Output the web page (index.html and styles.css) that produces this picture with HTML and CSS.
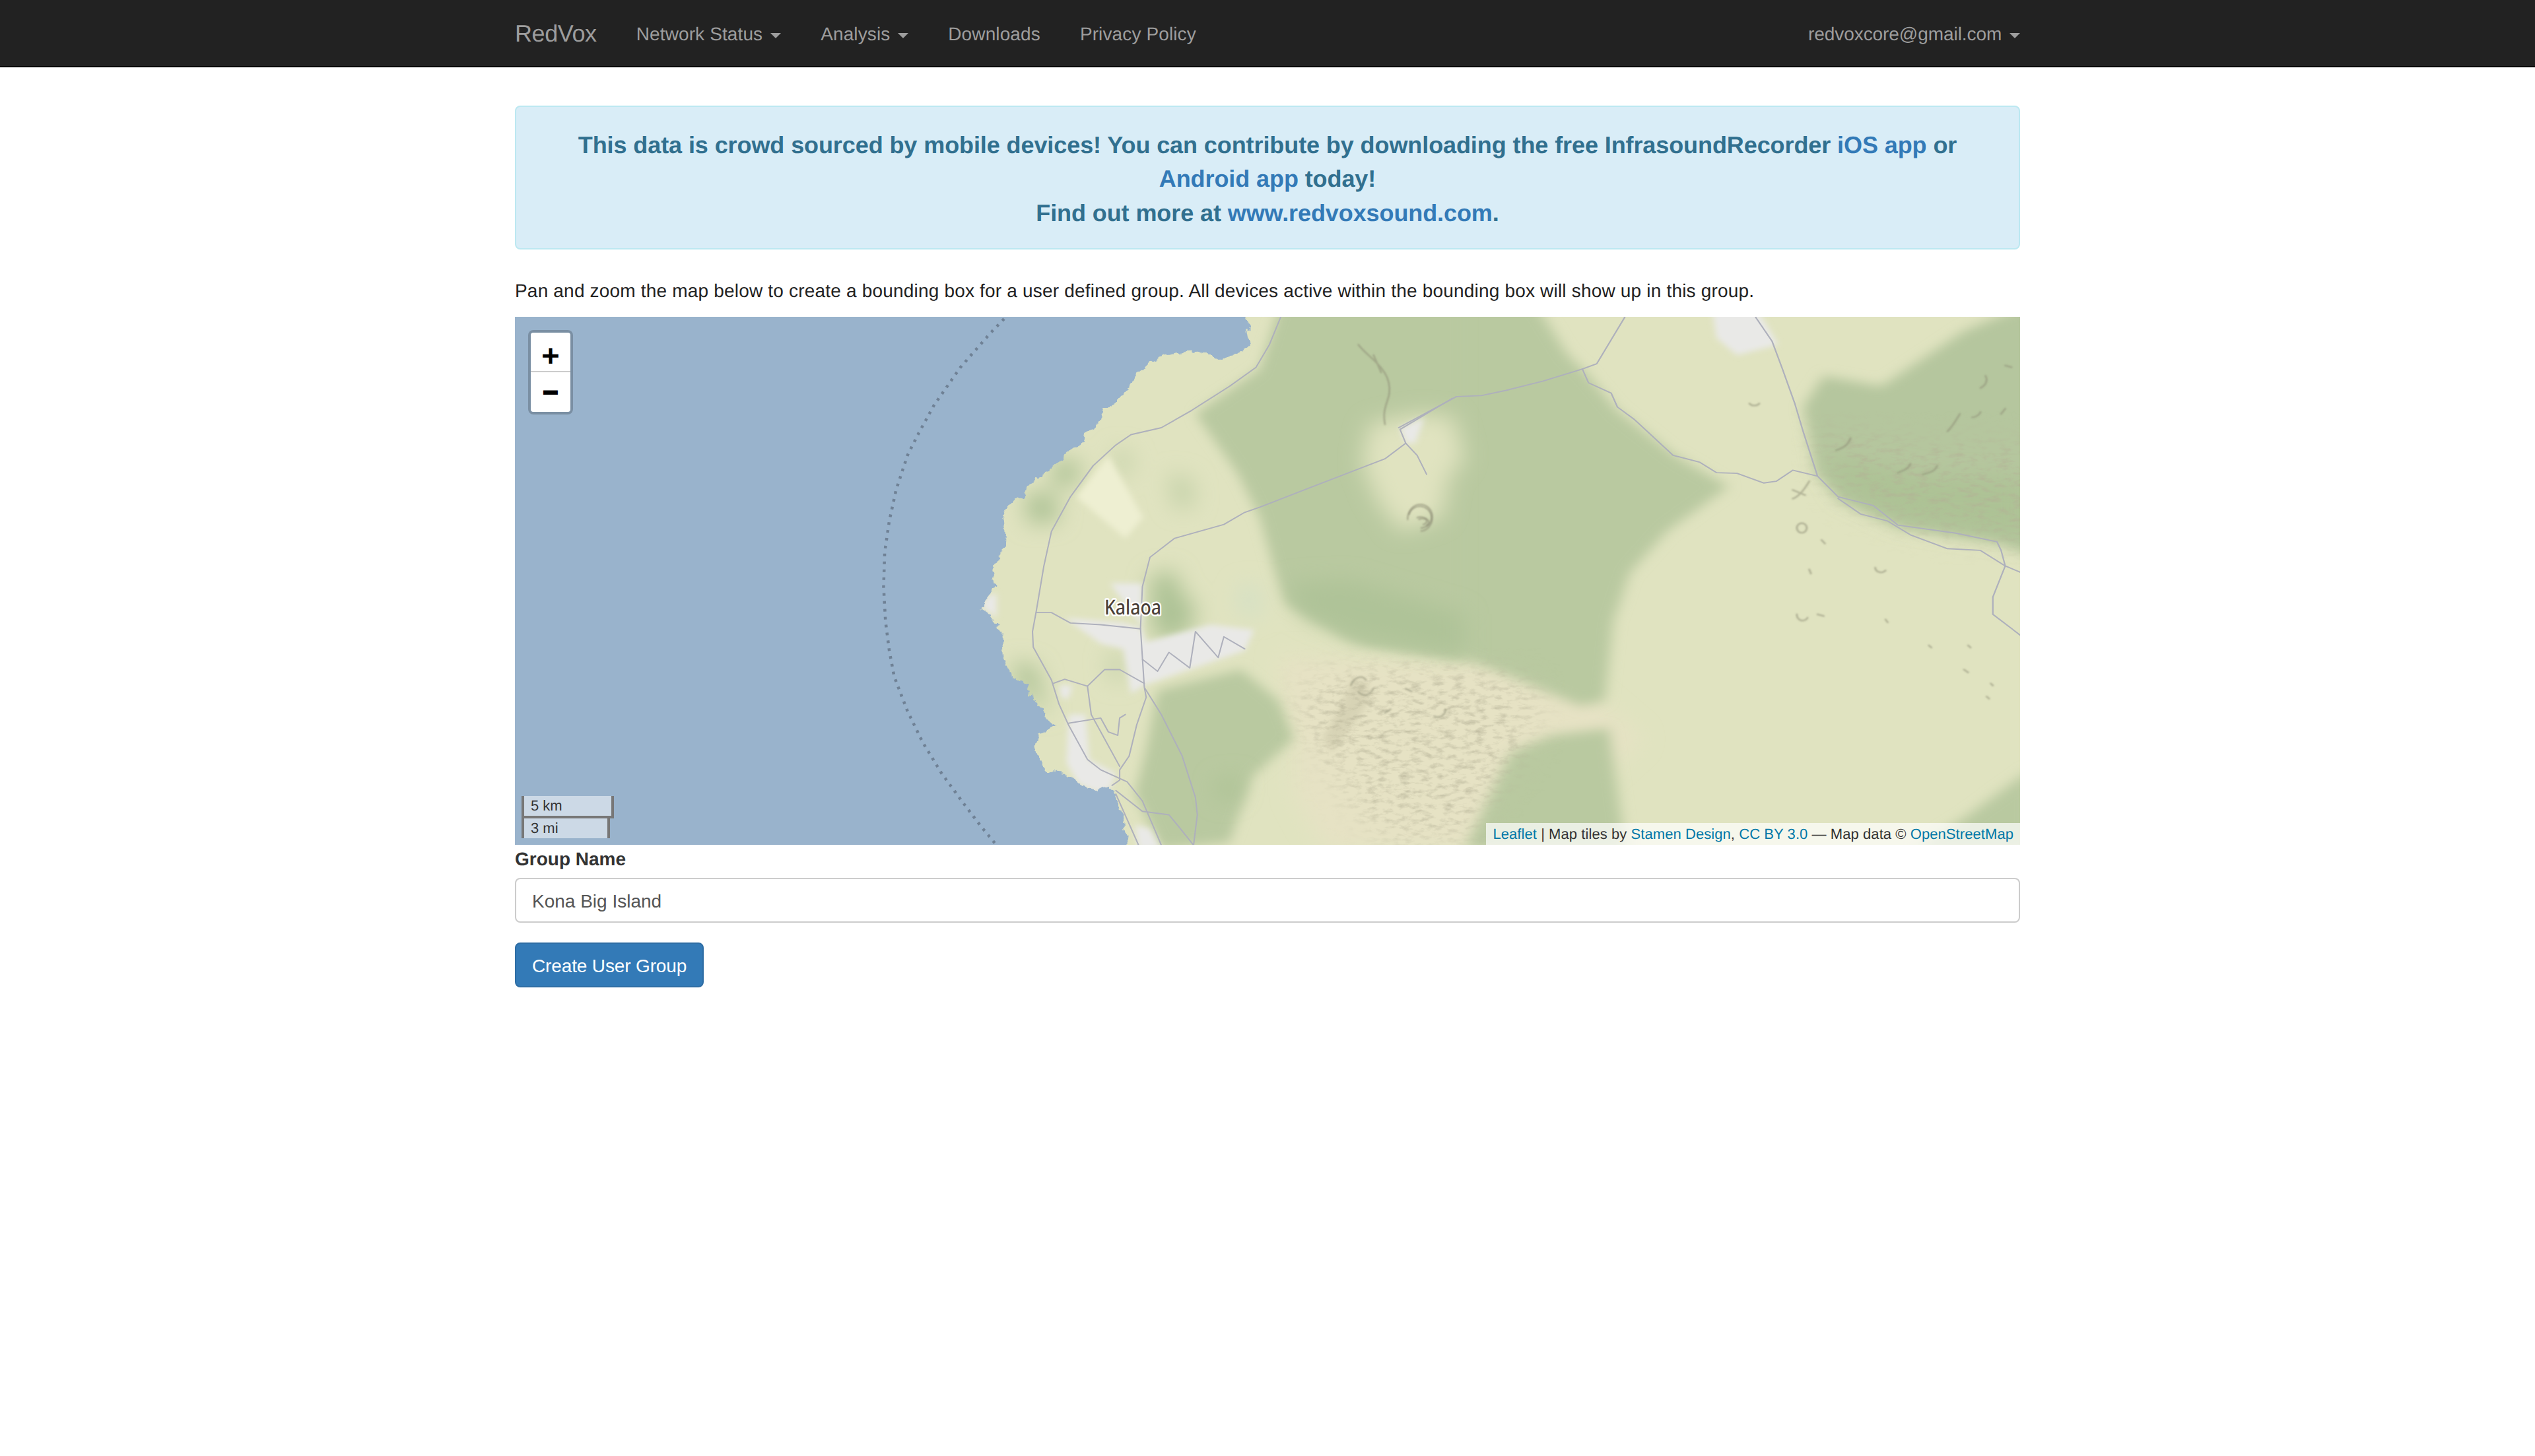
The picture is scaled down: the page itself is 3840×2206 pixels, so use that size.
FILE: index.html
```html
<!DOCTYPE html>
<html lang="en">
<head>
<meta charset="utf-8">
<title>RedVox</title>
<link rel="stylesheet" href="styles.css">
</head>
<body>
<nav class="navbar">
  <div class="container nav-inner">
    <a class="brand" href="#">RedVox</a>
    <ul class="nav-list">
      <li><a href="#">Network Status <span class="caret"></span></a></li>
      <li><a href="#">Analysis <span class="caret"></span></a></li>
      <li><a href="#">Downloads</a></li>
      <li><a href="#">Privacy Policy</a></li>
    </ul>
    <a class="nav-user" href="#">redvoxcore@gmail.com <span class="caret"></span></a>
  </div>
</nav>
<main class="container content">
  <div class="alert">
    This data is crowd sourced by mobile devices! You can contribute by downloading the free InfrasoundRecorder <a href="#">iOS app</a> or <a href="#">Android app</a> today!<br>
    Find out more at <a href="#">www.redvoxsound.com</a>.
  </div>
  <p class="intro">Pan and zoom the map below to create a bounding box for a user defined group. All devices active within the bounding box will show up in this group.</p>
  <div class="map">
    <svg class="map-art" viewBox="0 0 2280 800" xmlns="http://www.w3.org/2000/svg">
      <defs>
        <filter id="b30" x="-30%" y="-30%" width="160%" height="160%"><feGaussianBlur stdDeviation="30"/></filter>
        <filter id="b20" x="-30%" y="-30%" width="160%" height="160%"><feGaussianBlur stdDeviation="16"/></filter>
        <filter id="b8" x="-30%" y="-30%" width="160%" height="160%"><feGaussianBlur stdDeviation="8"/></filter>
        <filter id="b1" x="-30%" y="-30%" width="160%" height="160%"><feGaussianBlur stdDeviation="1"/></filter>
        <filter id="b2" x="-30%" y="-30%" width="160%" height="160%"><feGaussianBlur stdDeviation="2"/></filter>
        <filter id="shade" x="-10%" y="-10%" width="120%" height="120%">
          <feGaussianBlur in="SourceGraphic" stdDeviation="45" result="mask"/>
          <feTurbulence type="fractalNoise" baseFrequency=".035 .07" numOctaves="5" seed="11" result="n"/>
          <feColorMatrix in="n" type="matrix" values="0 0 0 0 .45  0 0 0 0 .43  0 0 0 0 .30  1.5 0 0 0 -.68" result="dark"/>
          <feComposite in="dark" in2="mask" operator="in"/>
        </filter>
        <filter id="coast" x="-5%" y="-5%" width="110%" height="110%">
          <feTurbulence type="fractalNoise" baseFrequency=".035" numOctaves="4" seed="4" result="n"/>
          <feDisplacementMap in="SourceGraphic" in2="n" scale="26" xChannelSelector="R" yChannelSelector="G"/>
          <feGaussianBlur stdDeviation=".7"/>
        </filter>
      </defs>
      <rect class="land" width="2280" height="800"/>
      <polygon class="rough-base" filter="url(#b30)" transform="translate(520 -10) scale(.574 .5236)" points="1110,1000 1568,1020 1780,1000 1940,1120 2070,1240 1950,1360 1890,1560 1230,1560 1150,1400 1150,1240 1120,1130"/>
      <g filter="url(#b20)" transform="translate(1320 -10) scale(.625 .5236)">
        <polygon class="green" points="-60,-40 350,-40 440,130 480,175 560,290 700,420 830,510 680,640 590,760 550,900 530,1130 470,1145 300,1060 150,990 -60,960"/>
        <polygon class="green" points="540,1210 580,1560 190,1560 300,1280 400,1230"/>
        <polygon class="green" points="1560,1330 1560,1560 1280,1560 1400,1470"/>
        <polygon class="green-hill" points="1600,-40 1400,60 1200,220 1060,190 1010,280 1040,470 1100,550 1250,630 1480,670 1600,730"/>
      </g>
      <g filter="url(#b30)" transform="translate(1320 -10) scale(.625 .5236)">
        <polygon class="green-deep" points="1060,420 1300,480 1560,490 1560,670 1470,650 1250,610 1110,530"/>
      </g>
      <g filter="url(#b20)" transform="translate(520 -10) scale(.574 .5236)">
        <polygon class="green" points="1120,-40 1060,170 890,300 1000,470 1060,600 1100,760 1130,850 1300,960 1600,1010 1600,-40"/>
        <polygon class="green" points="790,1100 1010,1040 1110,1130 1150,1240 1040,1350 980,1540 800,1560 730,1400 760,1270"/>
      </g>
      <g filter="url(#b30)" transform="translate(520 -10) scale(.574 .5236)">
        <polygon class="pale" points="1350,330 1480,300 1570,310 1600,430 1560,480 1540,600 1430,640 1370,550 1330,440"/>
        <polygon class="green-band" points="1130,790 1300,780 1600,880 1600,1000 1300,940 1170,880"/>
        <polygon class="green-deep" points="520,430 590,440 570,510 510,510"/>
        <polygon class="green-deep" points="440,530 520,530 530,610 450,620"/>
        <polygon class="green-soft" points="675,400 720,410 715,480 685,480"/>
        <polygon class="green-soft" points="820,470 880,490 885,570 835,575"/>
        <polygon class="green-deep" points="770,770 830,750 860,830 890,850 880,930 810,960 775,930"/>
        <polygon class="green-deep" points="410,1015 470,1030 490,1130 510,1180 470,1140 415,1070"/>
        <polygon class="green-deep" points="945,1360 1010,1350 1000,1410 950,1420"/>
        <polygon class="green-soft" points="660,990 700,990 700,1080 665,1070"/>
        <polygon class="mint" points="1005,800 1050,790 1060,890 1010,880"/>
      </g>
      <g filter="url(#b8)" transform="translate(520 -10) scale(.574 .5236)">
        <polygon class="cream" points="660,420 752,600 705,660 575,540"/>
        <polygon class="urban" points="665,790 750,790 750,920 700,905 545,890 640,965 700,980 720,1110 755,1085 1020,985 1045,925 930,910 760,960 745,910"/>
        <polygon class="urban" points="345,825 365,820 365,890 340,870 325,855"/>
        <polygon class="urban" points="530,1085 565,1085 555,1125 535,1120"/>
        <polygon class="urban" points="555,1170 600,1170 610,1300 680,1340 665,1385 630,1395 580,1370 550,1310"/>
        <polygon class="urban" points="1430,340 1495,310 1470,385 1445,385"/>
        <polygon class="urban" points="730,1490 770,1500 800,1560 740,1560"/>
      </g>
      <g filter="url(#b8)" transform="translate(1320 -10) scale(.625 .5236)">
        <polygon class="urban" points="790,0 900,0 950,100 850,130 800,80"/>
      </g>
      <polygon class="shade-src" filter="url(#shade)" transform="translate(520 -10) scale(.574 .5236)" points="1180,1060 1500,1030 1760,1060 1800,1160 1730,1320 1640,1450 1600,1540 1380,1530 1240,1320 1170,1200"/>
      <polygon class="ridge" filter="url(#b8)" transform="translate(520 -10) scale(.574 .5236)" points="1300,1070 1345,1075 1350,1130 1300,1210 1250,1280 1225,1240 1280,1130"/>
      <polygon class="shade-src" filter="url(#shade)" transform="translate(1320 -10) scale(.625 .5236)" points="1040,330 1300,380 1620,380 1620,700 1260,610 1100,530"/>

      <polygon class="water" filter="url(#coast)" transform="translate(520 -10) scale(.574 .5236)" points="1020,-30 1030,70 1035,100 1000,125 950,140 900,120 830,125 770,150 735,185 720,220 700,240 680,265 650,285 645,310 625,340 600,355 595,385 565,400 540,430 500,465 470,490 440,505 435,540 400,560 380,595 385,650 380,700 355,745 365,800 345,825 322,855 345,880 380,930 385,1000 405,1060 450,1085 460,1130 495,1165 520,1205 480,1225 470,1275 495,1335 540,1340 590,1375 630,1395 665,1375 685,1420 700,1490 720,1600 -1000,1600 -1000,-30"/>

      <g class="road" filter="url(#b1)" transform="translate(520 -10) scale(.574 .5236)">
        <polyline points="1115,20 1085,100 1050,165 980,220 880,290 800,340 720,360 680,390 620,450 560,540 510,640 490,740 470,870 460,930 462,975 510,1070 530,1140 555,1200 605,1300 640,1330 710,1365 750,1420 800,1548"/>
        <polyline points="1568,255 1430,345 1445,385 1390,430 1200,510 1060,570 1020,585 965,620 835,660 770,715 750,800 745,920 755,1090 760,1120 735,1200 715,1290 690,1330 690,1360 670,1375"/>
        <polyline points="470,875 510,875 560,905 640,910 745,922"/>
        <polyline points="750,1010 790,1045 820,990 875,1035 890,930 950,1005 965,945 1020,980"/>
        <polyline points="515,1080 545,1068 605,1088 650,1040 690,1040 755,1080"/>
        <polyline points="605,1088 615,1170 690,1320"/>
        <polyline points="555,1195 640,1180 660,1220 685,1230 690,1180 705,1170"/>
        <polyline points="757,1095 800,1170 855,1290 890,1410 895,1460 885,1548"/>
        <polyline points="680,1390 750,1450 820,1460 850,1500 885,1548"/>
        <polyline points="680,1400 740,1548"/>
        <polyline points="1445,385 1475,420 1500,475"/>
      </g>
      <g class="road" filter="url(#b1)" transform="translate(1320 -10) scale(.625 .5236)">
        <polyline points="578,20 510,155 475,170 380,205 290,232 230,247 170,250 30,340"/>
        <polyline points="475,170 490,210 545,240 560,280 600,315 695,420 760,440 800,470 850,472 915,500 945,495 985,463 1045,480 1095,540 1180,565 1240,622 1380,645 1480,670 1490,695 1500,740 1536,758"/>
        <polyline points="895,20 935,90 960,170 990,270 1010,350 1045,480"/>
        <polyline points="1095,545 1150,590 1215,610 1270,650 1360,690 1440,695 1500,740 1470,830 1470,880 1536,940"/>
      </g>
      <g class="crater" filter="url(#b2)" transform="translate(1320 -10) scale(.625 .5236)">
        <path d="M55 590a28 34 0 1 1 30 40M75 600a14 10 0 0 1 15 20"/>
        <path d="M995 630a12 14 0 1 0 24 0a12 14 0 1 0-24 0"/>
        <path d="M995 880a14 16 0 0 0 26 10M1045 880l15 5"/>
        <path d="M1185 745a14 14 0 0 0 25 8M1025 750l4 12M1055 665l8 10M1210 895l5 8M1315 970l6 6M1410 970l6 6M1400 1040l10 8M1465 1080l5 6M1455 1118l6 6"/>
        <path d="M985 545c15-5 30-30 40-50M985 520l30 15"/>
        <path d="M880 270a14 12 0 0 0 24 0M1090 405c15-5 30-15 35-35"/>
        <path d="M1240 470c10-5 25-10 30-25M1300 475c12-3 30-8 35-25M1440 225c10-5 20-20 12-35M1360 350c10-10 20-30 30-50"/>
        <path d="M1500 160l15 5M1490 300l10-15M1420 310c8 0 18-8 20-15"/>
      </g>
      <g class="crater" filter="url(#b2)" transform="translate(520 -10) scale(.574 .5236)">
        <path d="M1450 605a32 36 0 1 1 36 34M1480 605a14 10 0 0 1 20 18"/>
        <path d="M1300 1085c10-25 30-30 40-15M1320 1105c15 15 30 10 40-10M1390 1165l15-10M1520 1175c10 5 30 0 30-20M1445 1095l15 8"/>
        <path d="M1320 100c20 30 70 60 80 110s-20 60-10 120M1360 130l20 50"/>
      </g>

      <polyline class="boundary" transform="translate(520 -10) scale(.574 .5236)" vector-effect="non-scaling-stroke" points="385,25 350,65 310,115 270,165 235,220 200,275 160,355 130,420 100,520 82,610 70,700 67,800 72,900 82,985 95,1060 130,1160 170,1250 220,1340 280,1430 325,1495 365,1548"/>

      <text class="place" x="936" y="451" textLength="86" lengthAdjust="spacingAndGlyphs">Kalaoa</text>
    </svg>
    <div class="zoom">
      <a class="zoom-btn zoom-in" href="#">+</a>
      <a class="zoom-btn zoom-out" href="#">−</a>
    </div>
    <div class="scale">
      <div class="scale-line scale-km">5 km</div>
      <div class="scale-line scale-mi">3 mi</div>
    </div>
    <div class="attribution"><a href="#">Leaflet</a> | Map tiles by <a href="#">Stamen Design</a>, <a href="#">CC BY 3.0</a> — Map data © <a href="#">OpenStreetMap</a></div>
  </div>
  <form class="form">
    <label class="label" for="group">Group Name</label>
    <input class="input" id="group" type="text" value="Kona Big Island">
    <button class="btn" type="button">Create User Group</button>
  </form>
</main>
</body>
</html>
```
FILE: styles.css
```css
* { box-sizing: border-box; }
html, body { margin: 0; padding: 0; }
body {
  font-family: "Liberation Sans", Arial, sans-serif;
  font-size: 28px;
  line-height: 40px;
  color: #333;
  background: #fff;
  text-rendering: geometricPrecision;
}
a { text-decoration: none; }
.container { width: 2280px; margin: 0 auto; }

.navbar {
  height: 102px;
  background: #222;
  border-bottom: 2px solid #080808;
}
.nav-inner { display: flex; align-items: center; height: 100px; }
.brand { font-size: 36px; color: #9d9d9d; margin-right: 30px; padding-top: 2px; letter-spacing: -.4px; }
.nav-list { display: flex; list-style: none; margin: 0; padding: 0; flex: 1; }
.nav-list a { display: block; padding: 32px 30px 28px; color: #9d9d9d; letter-spacing: .12px; }
.nav-user { color: #9d9d9d; padding-top: 4px; letter-spacing: -.06px; }
.caret {
  display: inline-block;
  width: 0;
  height: 0;
  margin-left: 4px;
  vertical-align: middle;
  border-top: 8px solid;
  border-left: 8px solid transparent;
  border-right: 8px solid transparent;
}

.content { padding-top: 58px; }
.alert {
  padding: 32px 30px 28px;
  margin-bottom: 40px;
  background: #d9edf7;
  border: 2px solid #bce8f1;
  border-radius: 8px;
  color: #31708f;
  font-size: 36px;
  line-height: 51.43px;
  font-weight: 700;
  letter-spacing: -.09px;
  text-align: center;
}
.alert a { color: #337ab7; }
.intro { margin: 0 0 19px; padding-top: 3px; color: #222; letter-spacing: .19px; }

.map { position: relative; width: 2280px; height: 800px; overflow: hidden; background: #99b3cc; }
.map-art { display: block; width: 2280px; height: 800px; }
.water { fill: #99b3cc; }
.land { fill: #e0e3c0; }
.green { fill: #b9c9a0; }
.green-deep { fill: #adc295; }
.green-band { fill: #afc398; }
.green-soft { fill: #c4d1a9; }
.green-hill { fill: #b5c69e; }
.pale { fill: #e0e3c0; }
.cream { fill: #eeefd2; }
.mint { fill: #d3e0c6; }
.urban { fill: #e9e9e7; }
.rough-base { fill: #e6e2c4; }
.shade-src { fill: #000; }
.ridge { fill: #a5a184; opacity: .22; }
.road polyline { fill: none; stroke: #aeb0bc; stroke-width: 3.6; stroke-linejoin: round; stroke-linecap: round; }
.crater path { fill: none; stroke: #8f8f78; stroke-width: 5; stroke-linecap: round; opacity: .55; }
.boundary { fill: none; stroke: #6f8195; stroke-width: 4.5; stroke-dasharray: 4 8; }
.place {
  font-family: "Noto Sans", sans-serif;
  font-size: 31px;
  font-weight: 500;
  fill: #4a3f38;
  stroke: #fff;
  stroke-width: 5px;
  stroke-linejoin: round;
  paint-order: stroke;
  text-anchor: middle;
}

.zoom {
  position: absolute;
  top: 20px;
  left: 20px;
  width: 68px;
  background-clip: padding-box;
  border: 4px solid rgba(0, 0, 0, .2);
  border-radius: 8px;
}
.zoom-btn {
  display: block;
  width: 60px;
  height: 60px;
  background: #fff;
  color: #000;
  text-align: center;
}
.zoom-in {
  padding-top: 13px;
  font: 700 44px/44px "DejaVu Sans Mono", "Liberation Mono", monospace;
  border-bottom: 2px solid #ccc;
  border-radius: 4px 4px 0 0;
}
.zoom-out {
  padding-top: 2px;
  font: 700 40px/58px "Liberation Sans", sans-serif;
  -webkit-text-stroke: 2px #000;
  border-radius: 0 0 4px 4px;
}

.scale { position: absolute; left: 10px; bottom: 10px; color: #333; font-size: 22px; line-height: 30px; }
.scale-line {
  height: 30px;
  padding: 0 10px;
  background: rgba(255, 255, 255, .5);
  border: 4px solid #777;
  border-top: 0;
  border-bottom: 0;
  white-space: nowrap;
}
.scale-km { width: 140px; height: 34px; border-bottom: 4px solid #777; }
.scale-mi { width: 134px; }

.attribution {
  position: absolute;
  right: 0;
  bottom: 0;
  padding: 0 10px;
  background: rgba(255, 255, 255, .7);
  color: #333;
  font-size: 22px;
  line-height: 33px;
  letter-spacing: .07px;
  white-space: nowrap;
  height: 33px;
}
.attribution a { color: #0078a8; }

.form { display: flex; flex-direction: column; align-items: flex-start; }
.label { font-weight: 700; margin-bottom: 8px; padding-top: 2px; }
.input {
  width: 100%;
  height: 68px;
  padding: 14px 24px 10px;
  font: inherit;
  color: #555;
  background: #fff;
  border: 2px solid #ccc;
  border-radius: 8px;
  margin-bottom: 30px;
}
.btn {
  height: 68px;
  padding: 14px 24px 10px;
  font: inherit;
  letter-spacing: -.14px;
  color: #fff;
  background: #337ab7;
  border: 2px solid #2e6da4;
  border-radius: 8px;
}
```
